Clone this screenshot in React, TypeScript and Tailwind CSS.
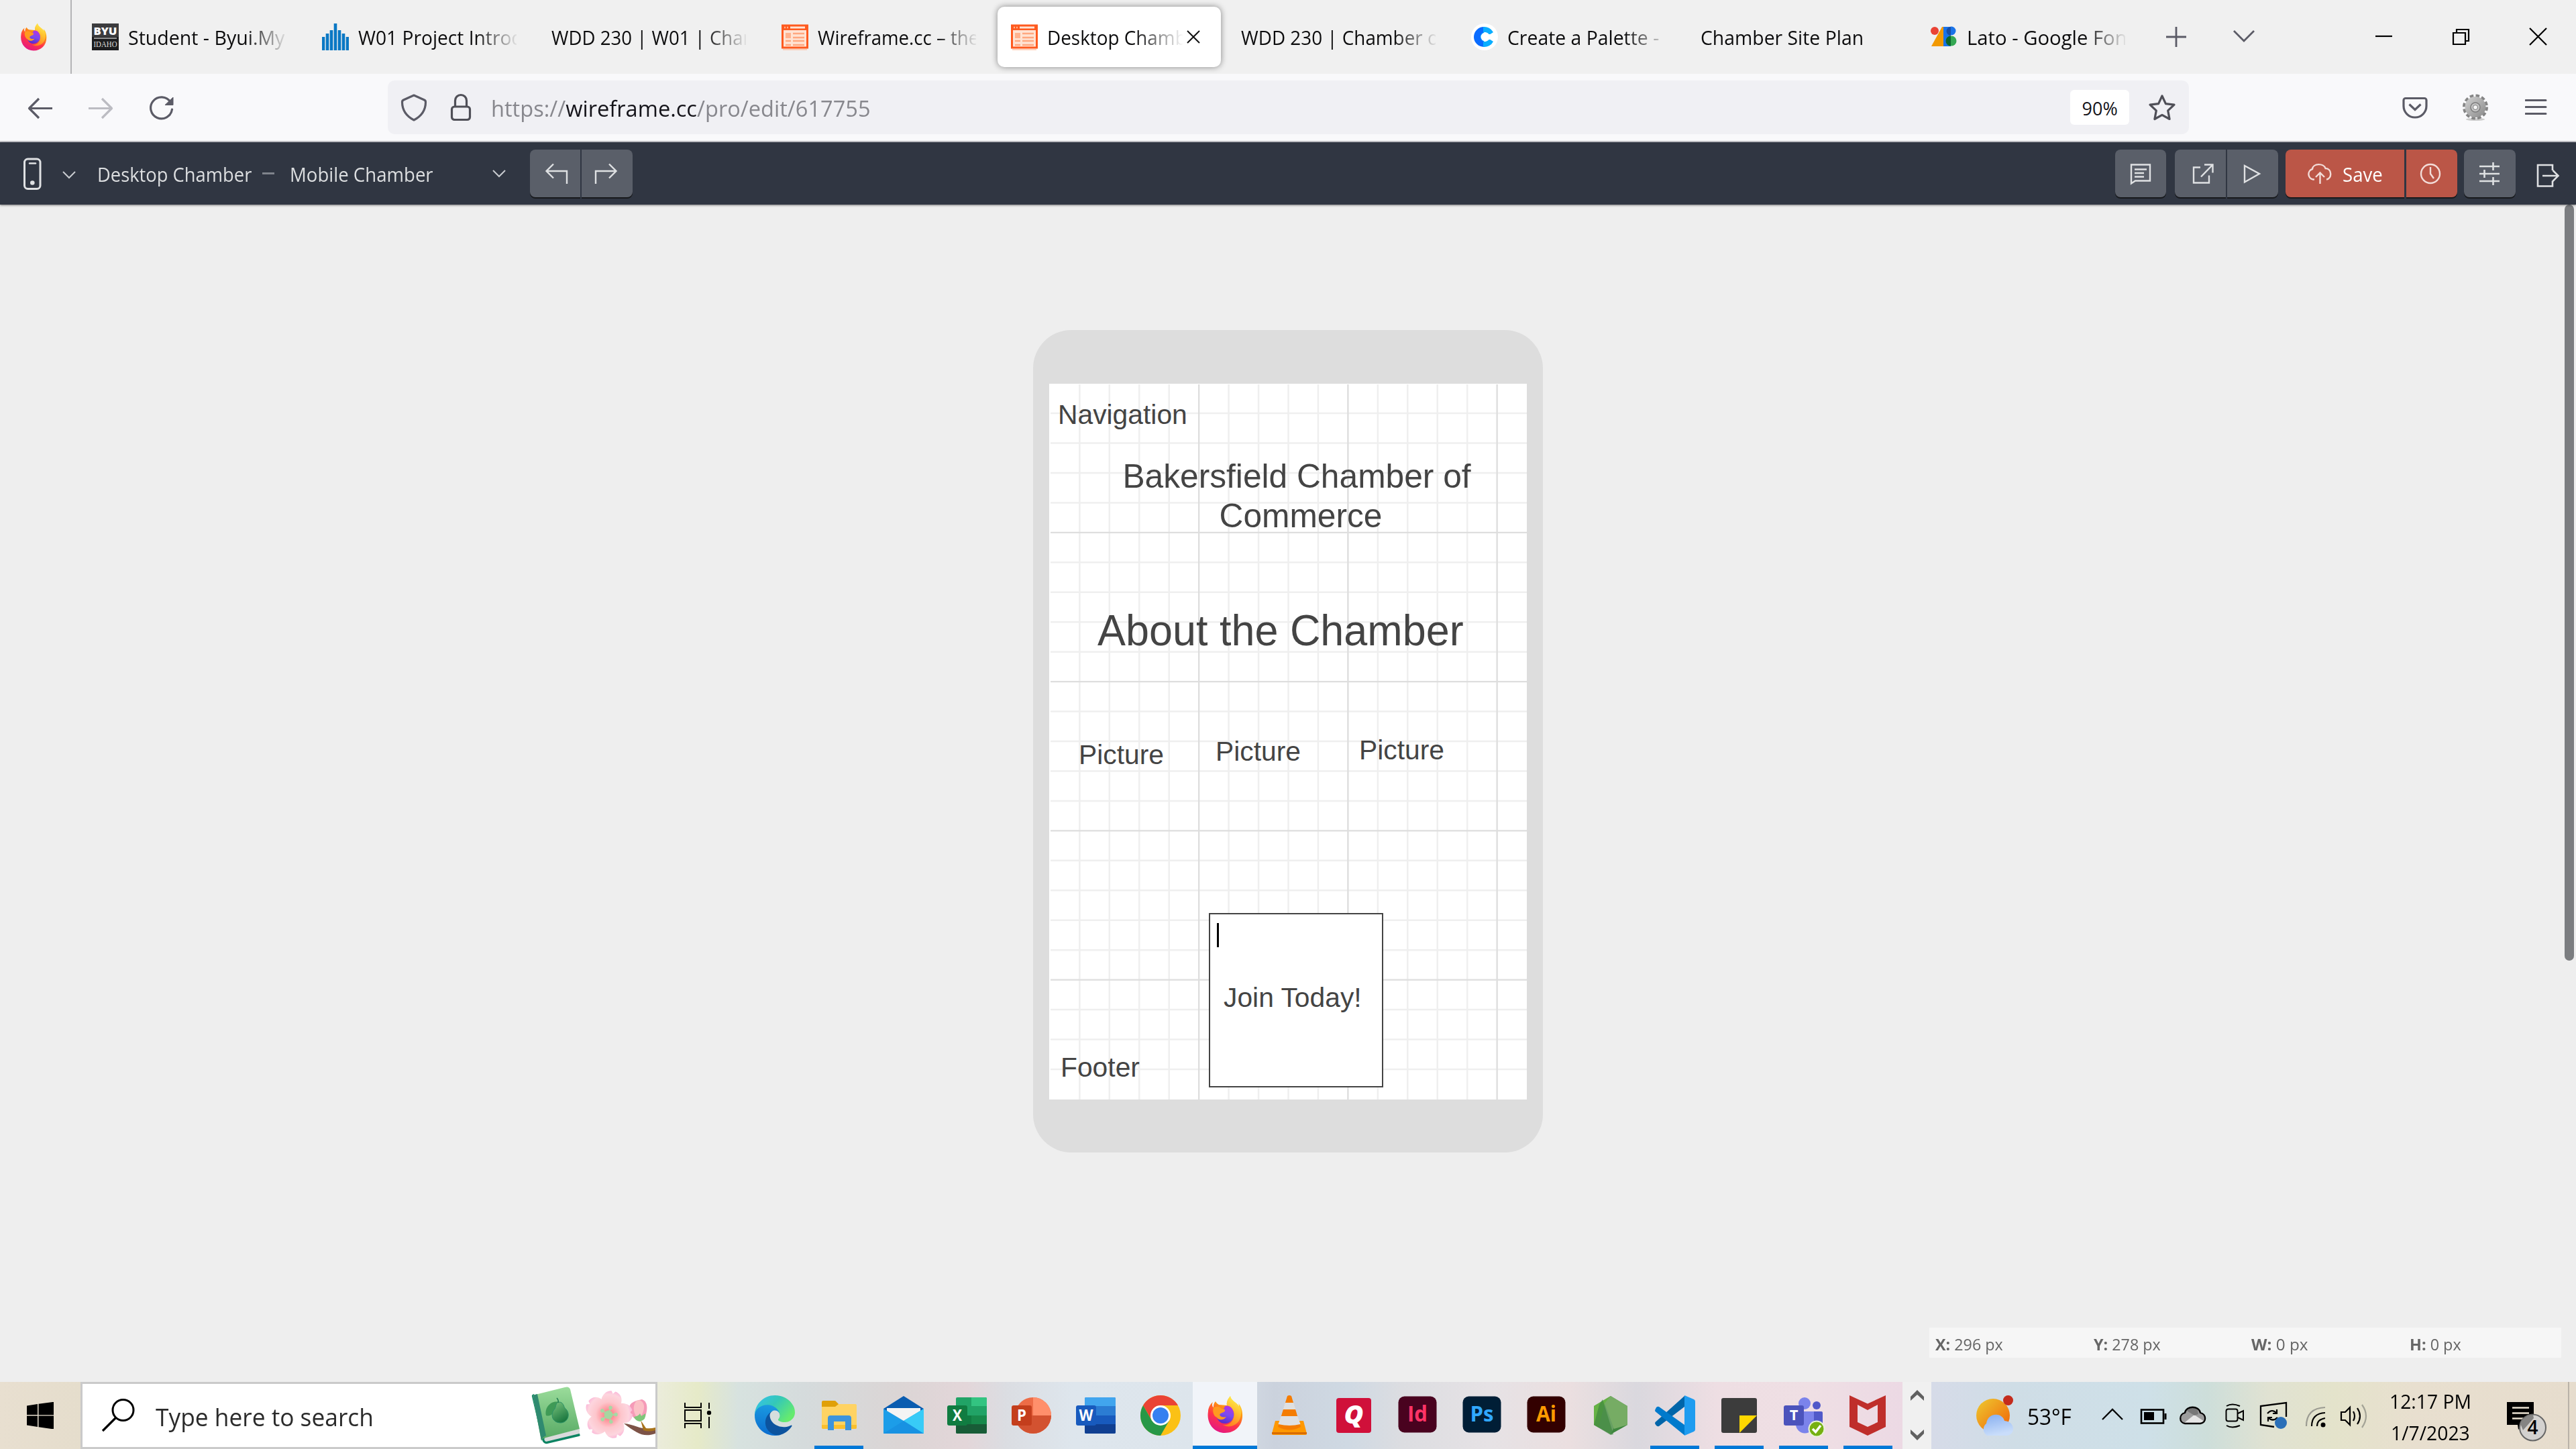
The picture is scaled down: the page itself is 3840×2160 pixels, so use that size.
import { useLayoutEffect, useRef, useState, type ReactNode } from "react";

/* Text squeezed horizontally so that it fills the given width. */
function Fit({ w, className = "", children }: { w: number; className?: string; children: ReactNode }) {
  const ref = useRef<HTMLSpanElement>(null);
  const [scale, setScale] = useState(1);
  useLayoutEffect(() => {
    if (ref.current) setScale(w / ref.current.offsetWidth);
  }, [w]);
  return (
    <span className={"block shrink-0 " + className} style={{ width: w }}>
      <span ref={ref} className="inline-block origin-left whitespace-nowrap" style={{ transform: `scaleX(${scale})` }}>
        {children}
      </span>
    </span>
  );
}

function Icon({ box, className = "", children }: { box: string; className?: string; children: ReactNode }) {
  const [, , w, h] = box.split(" ").map(Number);
  return (
    <svg viewBox={box} width={w} height={h} fill="none" className={"block shrink-0 " + className}>
      {children}
    </svg>
  );
}

function FirefoxLogo({ size, id, className = "" }: { size: number; id: string; className?: string }) {
  return (
    <svg viewBox="0 0 54 56" width={size} height={(size * 56) / 54} className={"block shrink-0 " + className}>
      <defs>
        <linearGradient id={id + "a"} x1="0.8" y1="0" x2="0.3" y2="1">
          <stop offset="0" stopColor="#fff44f" />
          <stop offset="0.35" stopColor="#ff980e" />
          <stop offset="0.65" stopColor="#ff3647" />
          <stop offset="1" stopColor="#e31587" />
        </linearGradient>
        <linearGradient id={id + "b"} x1="0.7" y1="0" x2="0.4" y2="1">
          <stop offset="0" stopColor="#b833e1" />
          <stop offset="0.5" stopColor="#7a4bf0" />
          <stop offset="1" stopColor="#592acb" />
        </linearGradient>
        <linearGradient id={id + "c"} x1="0.7" y1="0" x2="0.3" y2="1">
          <stop offset="0" stopColor="#fff44f" />
          <stop offset="1" stopColor="#ff8a16" />
        </linearGradient>
      </defs>
      <path d="M35 1c-4 5-6 9-5 14l-12-1c-2-1-4-3-5-5-3 3-3 6-3 9C7 16 8 12 9 10c-4 3-7 9-7 14C-1 42 11 56 27 56s27-12 26-28c0-7-3-13-6-16 1 2 1 4 1 5C44 10 36 8 35 1z" fill={`url(#${id}a)`} />
      <path d="M35 1c-4 5-6 9-5 14 9 3 12 10 10 18-2 8-9 12-16 11 12 7 27-2 27-17 0-5-1-9-3-11C44 10 36 8 35 1z" fill={`url(#${id}c)`} opacity="0.85" />
      <path d="M27 16c6-2 11 2 13 9 2 9-4 17-13 17-7 0-12-5-12-11 0-4 2-6 5-7 3-2 6-4 7-8z" fill={`url(#${id}b)`} />
      <path d="M10 18c4-2 9-2 12 2 3 0 6 1 5 3-1 3-6 2-8 6 2 4 6 4 10 3-3 5-11 6-14 1-5-2-7-9-5-15z" fill="#ff9a1f" />
    </svg>
  );
}

function WireframeIcon() {
  return (
    <Icon box="0 0 40 40">
      <rect x="1.500" y="3" width="37" height="33" fill="#ffe3d3" stroke="#ff5a1f" strokeWidth="3" />
      <rect x="1" y="2" width="38" height="8" fill="#ff5a1f" />
      <path d="M13 6h22" stroke="#ffe3d3" strokeWidth="3" />
      <path d="M4 6h2M8 6h2" stroke="#ffb38f" strokeWidth="2.500" />
      <rect x="6" y="14" width="8" height="8" fill="#ffb38f" />
      <path d="M17 15h17M17 21h17M6 26h8M17 26h17M6 32h8M17 32h17" stroke="#ffa880" strokeWidth="2.500" />
      <path d="M2 39h36" stroke="#ffc4a8" strokeWidth="1.500" />
    </Icon>
  );
}

const ByuIcon = () => (
  <Icon box="0 0 40 40">
    <rect width="40" height="40" fill="#1d1d1f" />
    <rect width="40" height="20" fill="#3c3c3e" />
    <text x="20" y="17" textAnchor="middle" textLength="35" lengthAdjust="spacingAndGlyphs" fontFamily="Open Sans" fontWeight="800" fontSize="15" fill="#fff">BYU</text>
    <path d="M3 22h34" stroke="#bbb" strokeWidth="1.500" />
    <text x="20" y="35" textAnchor="middle" textLength="35" lengthAdjust="spacingAndGlyphs" fontFamily="Liberation Serif" fontSize="12" fill="#ddd">IDAHO</text>
  </Icon>
);

const BarsIcon = () => (
  <Icon box="0 0 40 40">
    <path d="M2 20v20M8 15v25M14 10v30M20 0v40M26 10v30M32 15v25M38 20v20" stroke="#0a78c4" strokeWidth="4.600" />
  </Icon>
);

const CoolorsIcon = () => (
  <Icon box="0 0 40 40">
    <circle cx="20" cy="20" r="20" fill="#fff" />
    <path d="M19 5a15 15 0 0 0 0 30z" fill="#0a6cff" />
    <path d="M18 5a15 15 0 0 1 15 8l-6 4a7 7 0 1 0 0 6l6 4a15 15 0 0 1-15 8z" fill="#0aaeff" />
    <circle cx="21" cy="20" r="6.500" fill="#fff" />
    <path d="M22 16h12v8H22z" fill="#fff" />
  </Icon>
);

const GoogleFontsIcon = () => (
  <Icon box="0 0 40 40">
    <path d="M17 5h8v29H1z" fill="#f29900" />
    <circle cx="6" cy="11" r="6" fill="#ea4335" />
    <path d="M19 5h11v29H19z" fill="#1a73e8" />
    <circle cx="31" cy="11" r="6.500" fill="#1a73e8" />
    <circle cx="31" cy="26" r="7.500" fill="#34a853" />
    <path d="M30 5a6.500 6.500 0 0 0 0 13z" fill="#174ea6" />
    <path d="M30 18.500a7.500 7.500 0 0 0 0 15z" fill="#0d652d" />
  </Icon>
);

type TabData = { icon?: ReactNode; title: string; w: number; active?: boolean; plain?: boolean };
const tabs: TabData[] = [
  { icon: <ByuIcon />, title: "Student - Byui.My", w: 233 },
  { icon: <BarsIcon />, title: "W01 Project Introd", w: 246 },
  { title: "WDD 230 | W01 | Char", w: 297 },
  { icon: <WireframeIcon />, title: "Wireframe.cc – the", w: 240 },
  { icon: <WireframeIcon />, title: "Desktop Chamb", w: 208, active: true },
  { title: "WDD 230 | Chamber o", w: 295 },
  { icon: <CoolorsIcon />, title: "Create a Palette -", w: 226 },
  { title: "Chamber Site Plan", w: 243, plain: true },
  { icon: <GoogleFontsIcon />, title: "Lato - Google Fon", w: 239 },
];

function Tab({ t }: { t: TabData }) {
  return (
    <div
      className={
        "flex h-[90px] w-[332.6px] shrink-0 items-center rounded-[10px] pl-5 " +
        (t.active ? "bg-white shadow-[0_0_10px_rgba(0,0,0,0.45)]" : "")
      }
    >
      {t.icon && <div className="mr-[14px]">{t.icon}</div>}
      <div
        className={
          "mt-[2px] overflow-hidden " +
          (t.active
            ? "w-[203px] [mask-image:linear-gradient(to_right,black_130px,transparent_203px)]"
            : t.icon
              ? "w-[236px] [mask-image:linear-gradient(to_right,black_175px,transparent_240px)]"
              : "w-[290px] " + (t.plain ? "" : "[mask-image:linear-gradient(to_right,black_228px,transparent_294px)]"))
        }
      >
        <Fit w={t.w} className="text-[30px] leading-[50px] text-[#0c0c0d]">{t.title}</Fit>
      </div>
      {t.active && (
        <Icon box="0 0 22 22" className="ml-[4px]">
          <path d="M2 2l18 18M20 2L2 20" stroke="#111" strokeWidth="2" />
        </Icon>
      )}
    </div>
  );
}

function TabBar() {
  return (
    <div className="flex h-[110px] items-center bg-[#f0f0f0]">
      <div className="flex h-full w-[107px] items-center border-r-2 border-[#b4b4b6] pl-[30px]">
        <FirefoxLogo size={40} id="fxs" />
      </div>
      <div className="ml-[10px] flex gap-[10px]">
        {tabs.map((t, i) => <Tab key={i} t={t} />)}
      </div>
      <Icon box="3228 39 32 32" className="ml-[38px]">
        <path d="M3229 55h30M3244 40v30" stroke="#5b5b66" strokeWidth="2.800" />
      </Icon>
      <Icon box="3328 39 34 32" className="ml-[68px]">
        <path d="M3330 46l15 15 15-15" stroke="#5b5b66" strokeWidth="2.800" />
      </Icon>
      <Icon box="3540 38 27 32" className="ml-[178px]"><path d="M3541 53h25" stroke="#000" strokeWidth="2.200" /></Icon>
      <Icon box="3654 38 28 32" className="ml-[87px]">
        <path d="M3657 48h18v17h-18zM3662 48v-5h18v17h-5" stroke="#000" strokeWidth="2.200" />
      </Icon>
      <Icon box="3769 38 29 32" className="ml-[87px]"><path d="M3771 41l25 25M3796 41l-25 25" stroke="#000" strokeWidth="2.200" /></Icon>
    </div>
  );
}

function NavBar() {
  return (
    <div className="flex h-[102px] items-center border-b-2 border-[#c9c9ce] bg-[#f9f9fb]">
      <Icon box="41 141 38 40" className="ml-[41px] mt-[2px]">
        <path d="M78 161.500H44M58 147L43.500 161.500 58 176" stroke="#5b5b66" strokeWidth="3.200" strokeLinejoin="round" />
      </Icon>
      <Icon box="131 141 38 40" className="ml-[52px] mt-[2px]">
        <path d="M132 161.500h34M152 147l14.500 14.500L152 176" stroke="#bcbcc2" strokeWidth="3.200" strokeLinejoin="round" />
      </Icon>
      <Icon box="221 141 40 44" className="ml-[52px] mt-[4px]">
        <path d="M254 153A16 16 0 1 0 256.500 164" stroke="#5b5b66" strokeWidth="3.200" strokeLinecap="round" />
        <path d="M258 146v11.500h-12z" fill="#5b5b66" stroke="#5b5b66" strokeLinejoin="round" />
      </Icon>
      <div className="ml-[317px] flex h-20 w-[2685px] items-center rounded-[10px] bg-[#f0f0f4]">
        <Icon box="597 139 40 42" className="ml-[19px]">
          <path d="M617 142l15.500 7c1.500.7 2 1.500 2 3 0 12-6 21-17.500 27-11.500-6-17.500-15-17.500-27 0-1.500.5-2.300 2-3z" stroke="#5b5b66" strokeWidth="3.200" strokeLinejoin="round" />
        </Icon>
        <Icon box="670 139 34 42" className="ml-[33px]">
          <rect x="673.500" y="159" width="27" height="19.500" rx="4" stroke="#4f4f57" strokeWidth="3.200" />
          <path d="M678.500 159v-9a8.500 8.500 0 0 1 17 0v9" stroke="#4f4f57" strokeWidth="3.200" />
        </Icon>
        <Fit w={566} className="ml-[28px] mt-[3px] text-[33px] leading-[60px] text-[#87878d]">
          https://<span className="text-[#15141a]">wireframe.cc</span>/pro/edit/617755
        </Fit>
        <div className="ml-[1788px] flex h-[52px] w-[88px] items-center justify-center rounded-md bg-white">
          <Fit w={53} className="mt-[3px] text-[27px] leading-[50px] text-[#15141a]">90%</Fit>
        </div>
        <Icon box="3202 139 42 42" className="ml-[28px]">
          <path d="M3223 143l5.400 11.600 12.600 1.600-9.300 8.700 2.400 12.600-11.100-6.200-11.100 6.200 2.400-12.600-9.300-8.700 12.600-1.600z" stroke="#4f4f57" strokeWidth="3.200" strokeLinejoin="round" />
        </Icon>
      </div>
      <Icon box="3580 140 40 40" className="ml-[317px]">
        <path d="M3586 146.500h28a3 3 0 0 1 3 3V158a17 17 0 0 1-34 0v-8.500a3 3 0 0 1 3-3z" stroke="#5b5b66" strokeWidth="3.200" />
        <path d="M3591.500 155.500l8.500 8 8.500-8" stroke="#5b5b66" strokeWidth="3.200" />
      </Icon>
      <Icon box="3670 140 40 40" className="ml-[50px]">
        <defs>
          <linearGradient id="gear" x1="0" y1="0" x2="1" y2="1"><stop offset="0" stopColor="#d2d2d2" /><stop offset="1" stopColor="#8a8a8a" /></linearGradient>
        </defs>
        <ellipse cx="3690" cy="178" rx="14" ry="2" fill="#ccc" />
        <circle cx="3690" cy="159.500" r="16.500" stroke="#858585" strokeWidth="5" strokeDasharray="5.400 3.240" />
        <circle cx="3690" cy="159.500" r="15.500" fill="url(#gear)" />
        <circle cx="3690" cy="160" r="7" fill="#c6c6c6" stroke="#7d7d7d" strokeWidth="1.500" />
        <circle cx="3690" cy="160" r="3.500" fill="#f5f5f5" stroke="#777" />
      </Icon>
      <Icon box="3764 140 33 40" className="ml-[54px]">
        <path d="M3765 149.500h30M3765 159.500h30M3765 169.500h30" stroke="#5b5b66" strokeWidth="3" strokeLinecap="round" />
      </Icon>
    </div>
  );
}

const btn = "flex h-[71px] items-center justify-center shadow-[0_2px_0_#17191c]";

function AppBar() {
  const s = "#dfe1e3";
  return (
    <div className="relative z-10 flex h-[93px] items-center bg-[#303642] text-[29px] leading-[60px] text-[#dcdee0] shadow-[0_1px_3px_rgba(0,0,0,0.5)]">
      <Icon box="34 232 29 52" className="ml-[34px]">
        <rect x="36.500" y="236" width="23.500" height="44.500" rx="5" stroke={s} strokeWidth="3" />
        <path d="M44 242.500h9" stroke={s} strokeWidth="2.500" strokeLinecap="round" />
        <circle cx="48.300" cy="271.500" r="3.300" fill={s} />
      </Icon>
      <Icon box="92 250 22 20" className="ml-[29px] mt-[2px]"><path d="M94 256l9 9 9-9" stroke="#c9ccd0" strokeWidth="2" /></Icon>
      <Fit w={230} className="ml-[31px] mt-[3px]">Desktop Chamber</Fit>
      <div className="ml-[16px] h-[3px] w-[18px] bg-[#7f848c]" />
      <Fit w={214} className="ml-[23px] mt-[3px]">Mobile Chamber</Fit>
      <Icon box="733 248 22 20" className="ml-[87px]"><path d="M735 253l9 9 9-9" stroke="#c9ccd0" strokeWidth="2" /></Icon>
      <div className="ml-[35px] flex gap-[2px]">
        <div className={btn + " w-[75px] rounded-l-lg bg-[#5a5f69] pl-[3px]"}>
          <Icon box="812 243 35 34"><path d="M845 275v-19h-30M825 245.500l-10.500 10.500 10.500 10.500" stroke={s} strokeWidth="2.400" /></Icon>
        </div>
        <div className={btn + " w-[76px] rounded-r-lg bg-[#5a5f69] pr-[4px]"}>
          <Icon box="885 243 35 34"><path d="M887 275v-19h30M907 245.500l10.500 10.500-10.500 10.500" stroke={s} strokeWidth="2.400" /></Icon>
        </div>
      </div>
      <div className={btn + " ml-[2210px] w-[76px] rounded-lg bg-[#5a5f69]"}>
        <Icon box="3176 243 32 34">
          <path d="M3178 246.500h28v24h-22l-6 4z M3183 253.500h18M3183 259h14M3183 264.500h14" stroke={s} strokeWidth="2.400" />
        </Icon>
      </div>
      <div className="ml-[13px] flex gap-[2px]">
        <div className={btn + " w-[76px] rounded-l-lg bg-[#5a5f69] pl-2"}>
          <Icon box="3268 243 32 34">
            <path d="M3280 250.500h-10v23h23v-11M3286 246.500h12.500v12M3298 247l-17 17.500" stroke={s} strokeWidth="2.400" />
          </Icon>
        </div>
        <div className={btn + " w-[76px] rounded-r-lg bg-[#5a5f69] pr-[2px]"}>
          <Icon box="3342 243 30 34"><path d="M3346 248l22 12-22 12.500z" stroke={s} strokeWidth="2.400" /></Icon>
        </div>
      </div>
      <div className="ml-[11px] flex gap-[2.500px]">
        <div className={btn + " w-[177px] rounded-l-lg bg-[#bb5647]"}>
          <Icon box="3438 243 36 34">
            <path d="M3448 268.500h-2a8 8 0 0 1-1-15.500c1-9 17-9 19.500-1 10 0 10 16 1.500 16.500M3456.500 275v-15M3450 265l6.500-6.500 6.500 6.500" stroke="#f3dcd8" strokeWidth="2.400" />
          </Icon>
          <Fit w={60} className="ml-[16px] mt-[3px] text-white">Save</Fit>
        </div>
        <div className={btn + " w-[76px] rounded-r-lg bg-[#bb5647] pr-[3px]"}>
          <Icon box="3606 243 34 34">
            <circle cx="3623" cy="260" r="14" stroke="#f3dcd8" strokeWidth="2.400" />
            <path d="M3623 250v10l5 7" stroke="#f3dcd8" strokeWidth="2.400" />
          </Icon>
        </div>
      </div>
      <div className={btn + " ml-[10px] w-[77px] rounded-lg bg-[#5a5f69]"}>
        <Icon box="3696 242 32 35">
          <path d="M3697 249h30M3697 260h30M3697 271h30M3717.500 243v12M3704.500 254v12M3717.500 265v12" stroke={s} strokeWidth="2.600" />
        </Icon>
      </div>
      <Icon box="3780 243 35 37" className="ml-[31px] mt-[6px]">
        <path d="M3804 254v-8h-22v31.500h22v-8M3789 262h23M3804.500 254l8 8-8 8" stroke={s} strokeWidth="2.600" />
      </Icon>
    </div>
  );
}

const cols = Array.from({ length: 15 }, (_, i) => i + 1);
const rows = Array.from({ length: 23 }, (_, i) => i + 1);

const label = "absolute whitespace-nowrap text-[40.8px] leading-[48px]";

function Phone() {
  return (
    <div className="mx-auto mt-[187px] h-[1226px] w-[760px] rounded-[57px] bg-[#ddd] px-6 pt-20">
      <div className="relative h-[1067px] w-[712px] bg-white font-['Liberation_Sans',Arial,sans-serif] text-[#444]">
        <svg viewBox="0 0 712 1067" width="712" height="1067" className="block" fill="none">
          {cols.map((i) => i % 5 !== 0 && <path key={i} d={`M${0.9 + i * 44.45} 1V1067`} stroke="#efefef" strokeWidth="2.500" />)}
          {rows.map((i) => i % 5 !== 0 && <path key={i} d={`M2 ${-0.400 + i * 44.45}H712`} stroke="#efefef" strokeWidth="2.500" />)}
          {cols.map((i) => i % 5 === 0 && <path key={i} d={`M${0.9 + i * 44.45} 1V1067`} stroke="#dedede" strokeWidth="2.400" />)}
          {rows.map((i) => i % 5 === 0 && <path key={i} d={`M2 ${-0.400 + i * 44.45}H712`} stroke="#dedede" strokeWidth="2.400" />)}
        </svg>
        <div className={label + " left-[13px] top-[22px]"}>Navigation</div>
        <div className="absolute left-[99px] top-[109px] w-[556px] text-center text-[49.7px] leading-[59px]">
          <div className="pr-4">Bakersfield Chamber of</div>
          <div className="pr-1">Commerce</div>
        </div>
        <div className="absolute left-[72px] top-[330px] whitespace-nowrap text-[65px] leading-[76px]">
          <Fit w={546}>About the Chamber</Fit>
        </div>
        <div className={label + " left-[44px] top-[529px]"}>Picture</div>
        <div className={label + " left-[248px] top-[524px]"}>Picture</div>
        <div className={label + " left-[462px] top-[522px]"}>Picture</div>
        <div className="absolute left-[238px] top-[789px] h-[260px] w-[260px] border-2 border-[#444] bg-white">
          <div className="absolute left-[10px] top-[13px] h-[36px] w-[3px] bg-black" />
        </div>
        <div className={label + " left-[260px] top-[891px]"}>Join Today!</div>
        <div className={label + " left-[17px] top-[995px]"}>Footer</div>
      </div>
    </div>
  );
}

function Editor() {
  const stats = [["X:", "296 px", 101], ["Y:", "278 px", 100], ["W:", "0 px", 84], ["H:", "0 px", 77]] as const;
  return (
    <div className="relative flex h-[1755px] flex-col bg-[#eee]">
      <Phone />
      <div className="mb-9 mr-[22px] mt-auto grid h-[45px] w-[942px] grid-cols-4 items-center self-end bg-[#f6f6f6] text-[24px] leading-[40px] text-[#666]">
        {stats.map(([k, v, w]) => (
          <Fit key={k} w={w} className="ml-[9px] mt-[4px]"><b>{k}</b> {v}</Fit>
        ))}
      </div>
      <div className="absolute right-[3px] top-0 h-[1127px] w-[14px] rounded-full bg-[#7b7d80]" />
    </div>
  );
}

function AdobeTile({ bg, fg, t }: { bg: string; fg: string; t: string }) {
  return (
    <>
      <rect x="1.500" y="1.500" width="57" height="54" rx="9" fill={bg} />
      <text x="30" y="39" textAnchor="middle" fontFamily="Open Sans" fontWeight="700" fontSize="32" textLength={t === "Ps" ? 35 : 30} lengthAdjust="spacingAndGlyphs" fill={fg}>{t}</text>
    </>
  );
}

function OfficeTile({ c, t }: { c: string; t: string }) {
  return (
    <>
      <rect x="0" y="15" width="30" height="30" rx="3" fill={c} />
      <text x="15" y="38" textAnchor="middle" fontFamily="Open Sans" fontWeight="700" fontSize="23" textLength={t === "W" ? 21 : 14} lengthAdjust="spacingAndGlyphs" fill="#fff">{t}</text>
    </>
  );
}

const apps: { name: string; open?: boolean; art: ReactNode }[] = [
  {
    name: "edge",
    art: (
      <g transform="scale(0.2344)">
        <defs>
          <linearGradient id="e1" x1="0" y1="0" x2="1" y2="0.6"><stop offset="0" stopColor="#35c1f1" /><stop offset="0.5" stopColor="#34c8b8" /><stop offset="1" stopColor="#66eb6e" /></linearGradient>
          <linearGradient id="e2" x1="0.5" y1="0" x2="0.4" y2="1"><stop offset="0" stopColor="#1b9de2" /><stop offset="1" stopColor="#0b6cce" /></linearGradient>
        </defs>
        <path fill="#0c549f" d="M231.100 190.500c-3.400 1.800-6.900 3.400-10.500 4.700-11.500 4.300-23.600 6.500-35.900 6.500-47.300 0-88.500-32.500-88.500-74.300.1-11.400 6.400-21.900 16.400-27.300-42.800 1.800-53.800 46.400-53.800 72.500 0 73.900 68.100 81.400 82.800 81.400 7.900 0 19.800-2.300 27-4.600l1.300-.4c27.600-9.500 51-28.100 66.600-52.800 1.200-1.900.6-4.300-1.200-5.500-1.300-.8-2.900-.9-4.200-.2z" />
        <path fill="url(#e2)" d="M105.700 241.400c-8.900-5.500-16.600-12.800-22.700-21.300-26.300-36-18.400-86.500 17.600-112.800 3.800-2.700 7.700-5.200 11.900-7.200 3.100-1.500 8.400-4.100 15.500-4 10.100.1 19.600 4.900 25.700 13 4 5.400 6.300 11.900 6.400 18.700 0-.2 24.500-79.600-80-79.600-43.900 0-80 41.700-80 78.200-.2 19.300 4 38.500 12.100 56 27.600 58.800 94.800 87.600 156.400 67.100-21.100 6.600-44.100 3.700-62.900-8.100z" />
        <path fill="url(#e1)" d="M152.300 148.900c-.8 1-3.300 2.500-3.300 5.700 0 2.600 1.700 5.100 4.700 7.200 14.400 10 41.500 8.700 41.600 8.700 10.700 0 21.100-2.900 30.300-8.300 18.800-11 30.400-31.100 30.400-52.900.3-22.400-8-37.300-11.300-43.900C223.500 23.900 177.700 0 128 0 57.500 0 0 56.500 0 127c.5-36.400 36.600-65.800 79.700-65.800 3.500 0 23.400.3 41.800 10 16.300 8.500 24.900 18.900 30.800 29.100 6.200 10.600 7.200 24 7.200 29.400s-2.700 13.300-7.200 19.200z" />
      </g>
    ),
  },
  {
    name: "explorer", open: true,
    art: (
      <>
        <path d="M6 8h17q2 0 3 2l4 4-4 4H4v-8q0-2 2-2z" fill="#e0a008" />
        <path d="M4 17h20l5-4h25q2 0 2 2v33q0 2-2 2H6q-2 0-2-2z" fill="#ffd363" />
        <path d="M4 44h52v4q0 2-2 2H6q-2 0-2-2z" fill="#fbc02d" />
        <path d="M13 52V34q0-4 4-4h27q4 0 4 4v18h-9V39H22v13z" fill="#3d94dc" />
      </>
    ),
  },
  {
    name: "mail",
    art: (
      <>
        <path d="M0 20L30 1l30 19v10H0z" fill="#0a5cb0" />
        <path d="M5 19h50v12L30 42 5 31z" fill="#f4f4f4" />
        <path d="M0 20l30 18 30-18v37H0z" fill="#1c9de8" />
        <path d="M60 20L30 38l30 19z" fill="#38cbf7" />
        <path d="M0 57L30 38l30 19z" fill="#1584dc" opacity="0.450" />
      </>
    ),
  },
  {
    name: "excel",
    art: (
      <>
        <rect x="13" y="3" width="46" height="54" rx="2" fill="#21a366" />
        <path d="M36 3h21q2 0 2 2v11H36z" fill="#33c481" />
        <path d="M13 30h23v13H13z" fill="#107c41" /><path d="M36 30h23v13H36z" fill="#17894b" />
        <path d="M13 43h46v12q0 2-2 2H15q-2 0-2-2z" fill="#185c37" />
        <OfficeTile c="#107c41" t="X" />
      </>
    ),
  },
  {
    name: "powerpoint",
    art: (
      <>
        <circle cx="32" cy="30" r="27" fill="#ed6c47" />
        <path d="M32 3a27 27 0 0 1 27 27H32z" fill="#ff8f6b" />
        <path d="M5 30h54a27 27 0 0 1-54 0z" fill="#d35230" />
        <OfficeTile c="#c43e1c" t="P" />
      </>
    ),
  },
  {
    name: "word",
    art: (
      <>
        <rect x="13" y="3" width="46" height="54" rx="2" fill="#2b7cd3" />
        <path d="M15 3h42q2 0 2 2v11H13V5q0-2 2-2z" fill="#41a5ee" />
        <path d="M13 30h46v13H13z" fill="#185abd" />
        <path d="M13 43h46v12q0 2-2 2H15q-2 0-2-2z" fill="#103f91" />
        <OfficeTile c="#185abd" t="W" />
      </>
    ),
  },
  {
    name: "chrome",
    art: (
      <>
        <circle cx="30" cy="30" r="30" fill="#fbc116" />
        <path d="M4 15a30 30 0 0 1 52 0H30L17 37z" fill="#ea4335" />
        <path d="M4 15l13 22.500L30 45l13-7.500L30 60A30 30 0 0 1 4 15z" fill="#279847" />
        <circle cx="30" cy="30" r="15" fill="#fff" />
        <circle cx="30" cy="30" r="12" fill="#3680f0" />
      </>
    ),
  },
  { name: "firefox", open: true, art: null },
  {
    name: "vlc",
    art: (
      <>
        <path d="M9 38h42l5 19q0 2-2 2H6q-2 0-2-2z" fill="#ff9800" />
        <path d="M4 55h52v3H4z" fill="#d96c00" />
        <path d="M27 1q3-2 6 0l14 46q-17 9-34 0z" fill="#f57c00" />
        <path d="M23.500 11h13l3 10h-19zM17.500 31h25l4 12q-16 4-33 0z" fill="#dfe0e1" />
      </>
    ),
  },
  {
    name: "quicken",
    art: (
      <>
        <rect x="4" y="4" width="52" height="52" rx="4" fill="#d0103a" />
        <text x="30" y="42" textAnchor="middle" fontFamily="Open Sans" fontWeight="800" fontStyle="italic" fontSize="37" textLength="29" lengthAdjust="spacingAndGlyphs" fill="#fff">Q</text>
      </>
    ),
  },
  { name: "indesign", art: <AdobeTile bg="#49021f" fg="#ff3366" t="Id" /> },
  { name: "photoshop", art: <AdobeTile bg="#001e36" fg="#31a8ff" t="Ps" /> },
  { name: "illustrator", art: <AdobeTile bg="#330000" fg="#ff9a00" t="Ai" /> },
  {
    name: "node",
    art: (
      <>
        <path d="M30 1l25 15v28L30 58 5 44V16z" fill="#68a063" />
        <path d="M30 1L5 16v28l7 4 9-36z" fill="#66b245" />
        <path d="M18 6l16 52-4 1L5 44l8-30z" fill="#3f873f" opacity="0.700" />
        <path d="M55 44L30 58l5-10z" fill="#3f873f" />
        <path d="M30 1l25 15v28L35 50 21 12z" fill="#76ac64" />
      </>
    ),
  },
  {
    name: "vscode", open: true,
    art: (
      <>
        <path d="M44 1v16L6 46q-2 1-4-1l-1.500-2q-1-1.500 0-3z" fill="#0065a9" />
        <path d="M.5 21L2 18q2-2 4-1l38 27v15.500L.5 24q-1-1.500 0-3z" fill="#007acc" />
        <path d="M44 0l14 6q2 1 2 3v42q0 2-2 3l-14 6z" fill="#1f9cf0" />
      </>
    ),
  },
  {
    name: "sticky", open: true,
    art: (
      <>
        <rect x="3" y="4" width="53" height="52" rx="3" fill="#3c3c3c" />
        <path d="M30 30h26L30 56z" fill="#ffd800" />
      </>
    ),
  },
  {
    name: "teams", open: true,
    art: (
      <>
        <circle cx="50" cy="15" r="6" fill="#5059c9" />
        <path d="M40 24h17q2 0 2 2v14a9 10 0 0 1-19 0z" fill="#5059c9" />
        <circle cx="32" cy="12" r="9" fill="#7b83eb" />
        <path d="M19 24h27v19a13 13 0 0 1-27 0z" fill="#7b83eb" />
        <rect x="1" y="15" width="30" height="30" rx="3" fill="#4b53bc" />
        <text x="16" y="37" textAnchor="middle" fontFamily="Open Sans" fontWeight="700" fontSize="22" fill="#fff">T</text>
        <circle cx="50" cy="50" r="12.500" fill="#e8f2d8" />
        <circle cx="50" cy="50" r="10.500" fill="#76b011" />
        <path d="M44 50l4.500 4.500L56 45" stroke="#fff" strokeWidth="3.500" fill="none" />
      </>
    ),
  },
  {
    name: "mcafee", open: true,
    art: <path d="M3 0l27 12.500L57 0v47L30 60 3 47zM15 14v26l15 7 15-7V14L30 22z" fill="#bf2e2b" fillRule="evenodd" />,
  },
];

function BlossomArt() {
  const petals = [0, 72, 144, 216, 288];
  return (
    <Icon box="790 2064 187 92" className="ml-auto">
      <defs>
        <linearGradient id="book" x1="0" y1="0" x2="0" y2="1"><stop offset="0" stopColor="#9bdc9b" /><stop offset="1" stopColor="#55a862" /></linearGradient>
        <linearGradient id="pear" x1="0" y1="0" x2="0.5" y2="1"><stop offset="0" stopColor="#7cc47e" /><stop offset="1" stopColor="#1d7a41" /></linearGradient>
        <radialGradient id="petal" gradientUnits="userSpaceOnUse" cx="907" cy="2109" r="38"><stop offset="0.1" stopColor="#ff7f86" /><stop offset="0.5" stopColor="#fdc6cc" /><stop offset="0.8" stopColor="#fdd5de" /><stop offset="1" stopColor="#fbaed8" /></radialGradient>
      </defs>
      <path d="M793 2082q-1-3 3-4l18 67 50-14v7q2 2-1 3l-47 11q-6 1-8-6z" fill="#0c8463" />
      <path d="M812 2143l52-13v7l-50 12q-4-2-2-6z" fill="#d9dadb" />
      <path d="M794 2080l48-12q6-2 8 3l14 59-50 13q-6 1-7 5z" fill="url(#book)" />
      <path d="M794 2080l7-2 13 62q-5 2-7 7z" fill="#2f8a70" />
      <path d="M833 2090c-12-3-22 9-19 20q6 2 11-4z" fill="#3f9a56" />
      <path d="M833 2090c7 0 7 6 9 9 9 7 6 21-6 22-14 0-16-14-9-21 2-3 1-9 6-10z" fill="url(#pear)" stroke="#2c9168" />
      <path d="M832 2091q1-4-2-7" stroke="#1e7a50" strokeWidth="1.500" />
      <path d="M930 2122c17 1 29 12 47 7v8c-18 6-27 0-47-15z" fill="#7d5347" />
      <path d="M955 2117l8 12q6 1 14-1v4q-10 3-18 0z" fill="#a8731c" />
      <path d="M938 2098c1-8 10-10 19-12 11 4 7 20 5 25l-9 7c-8-2-15-10-15-20z" fill="#f59ab8" />
      <path d="M949 2088c6-3 12 3 11 11-1 8-5 13-8 16-8-6-10-20-3-27z" fill="#fbc0c6" />
      <path d="M945 2112q7-1 9-5l2 4 6-4q2 9-8 12-7-1-9-7z" fill="#7fc67a" />
      {petals.map((a) => (
        <path key={a} d="M907 2112c-9-5-16-15-15-25 1-8 6-13 12-14l3 4 3-4c7 1 12 6 12 14 0 10-6 20-15 25z" fill="url(#petal)" transform={`rotate(${a + 12} 907 2109)`} />
      ))}
      {petals.map((a) => (
        <g key={a} transform={`rotate(${a + 16} 907 2109)`}>
          <path d="M907 2109v-10" stroke="#a8d8a4" strokeWidth="2" />
          <circle cx="907" cy="2098" r="2.800" fill="#a8d8a4" />
        </g>
      ))}
      <circle cx="907" cy="2109" r="6.500" fill="#a5d6a0" />
    </Icon>
  );
}

function Tray() {
  return (
    <div className="flex h-full flex-1 items-center">
      <Icon box="2944 2080 60 60" className="ml-[65px]">
        <defs>
          <linearGradient id="sun" x1="0" y1="0" x2="1" y2="1"><stop offset="0.100" stopColor="#eec02c" /><stop offset="0.900" stopColor="#f06a0a" /></linearGradient>
          <linearGradient id="cld" x1="0" y1="0" x2="0.300" y2="1"><stop offset="0" stopColor="#86aef0" /><stop offset="1" stopColor="#c9ddfa" /></linearGradient>
        </defs>
        <circle cx="2971" cy="2110" r="25" fill="url(#sun)" />
        <path d="M2962 2140a11 11 0 0 1-1-18c2-17 24-17 27-4 16 1 17 20 4 22z" fill="url(#cld)" />
        <circle cx="2993.500" cy="2087.500" r="7.500" fill="#c42b1c" />
      </Icon>
      <Fit w={66} className="ml-[18px] mt-[4px] text-[33px] leading-[60px]">53°F</Fit>
      <Icon box="3132 2090 34 40" className="ml-[44px]"><path d="M3134 2116l15-15 15 15" stroke="#000" strokeWidth="2.300" /></Icon>
      <Icon box="3190 2090 40 40" className="ml-[24px]">
        <rect x="3192" y="2101.500" width="33" height="20" stroke="#000" strokeWidth="2.600" />
        <path d="M3196 2105h15v12h-15z" fill="#000" /><path d="M3228 2107v9" stroke="#000" strokeWidth="3" />
      </Icon>
      <Icon box="3248 2090 42 40" className="ml-[18px]">
        <path d="M3257 2122c-9-1-9-14 0-16 2-11 21-11 23 0 9 2 10 14 0 16z" fill="#9c9c9c" />
        <path d="M3256 2121l15-12 15 10-4 3h-24z" fill="#e6e6e6" /><path d="M3260 2103q8-9 16-1l1 6-6 2z" fill="#777" />
        <path d="M3257 2122c-9-1-9-14 0-16 2-11 21-11 23 0 9 2 10 14 0 16z" stroke="#000" strokeWidth="2.300" />
      </Icon>
      <Icon box="3316 2090 32 40" className="ml-[26px]">
        <rect x="3318.500" y="2100.500" width="17" height="18" rx="3" stroke="#000" strokeWidth="2" />
        <path d="M3336 2107l8-4v14l-8-4M3319 2096q8-5 20 0M3319 2125q8 5 20 0" stroke="#000" strokeWidth="2" />
      </Icon>
      <Icon box="3368 2089 42 42" className="ml-[20px]">
        <path d="M3408 2112v-21l-38 5v28l20 3" stroke="#000" strokeWidth="2.300" />
        <path d="M3380 2107q7-8 14 0m0-6v6h-6M3395 2113q-7 7-14 0m0 6v-6h6" stroke="#000" strokeWidth="2.200" />
        <circle cx="3400" cy="2121" r="9" fill="#2a6fb8" />
      </Icon>
      <Icon box="3435 2090 34 40" className="ml-[25px]">
        <circle cx="3463" cy="2124" r="3.500" fill="#000" />
        <path d="M3454 2126q0-10 12-12M3446 2126q0-19 20-20" stroke="#000" strokeWidth="2.200" />
        <path d="M3438 2126q0-27 28-28" stroke="#9b9b92" strokeWidth="2.200" />
      </Icon>
      <Icon box="3488 2090 42 40" className="ml-[19px]">
        <path d="M3490 2105h6l7-7v26l-7-7h-6z" stroke="#000" strokeWidth="2.200" />
        <path d="M3508 2104q4 7 0 14M3514 2099q8 12 0 24" stroke="#000" strokeWidth="2.200" />
        <path d="M3521 2094q12 17 0 34" stroke="#a3a396" strokeWidth="2.200" />
      </Icon>
      <div className="ml-[32px] mt-[3px] flex flex-col text-[29px] leading-[47px]">
        <Fit w={122}>12:17 PM</Fit>
        <Fit w={118} className="ml-[2px]">1/7/2023</Fit>
      </div>
      <Icon box="3736 2080 62 72" className="ml-[52px] mt-[12px]">
        <path d="M3737 2090h40v34h-15l-8 7-1-7h-16z" fill="#000" />
        <path d="M3745 2098.500h25M3745 2106.500h25M3745 2114.500h25" stroke="#e8dfcf" strokeWidth="2.400" />
        <circle cx="3775.500" cy="2128" r="19.500" fill="#d3d1cf" stroke="#666" strokeWidth="2" />
        <path d="M3757 2122a19.500 19.500 0 0 1 19-13l1 5-16 18z" fill="#858483" />
        <text x="3775.500" y="2138" textAnchor="middle" fontFamily="Open Sans" fontWeight="600" fontSize="28" fill="#000">4</text>
      </Icon>
      <div className="ml-[30px] h-full w-[2px] bg-[#b9b2a8]" />
    </div>
  );
}

function Taskbar() {
  return (
    <div className="flex h-[100px] items-center text-black bg-[linear-gradient(90deg,#e8dfd0_0px,#e5ddcc_120px,#ebecdb_980px,#e6eac8_1040px,#d7e2df_1100px,#d5dbdc_1200px,#dbd5d5_1340px,#e3d6d9_1440px,#dbdde2_1500px,#dee6ed_1600px,#dde5ec_1780px,#cbd2dd_1900px,#cfd9e3_2010px,#dcdde1_2090px,#e6e2e5_2220px,#ebdfe0_2340px,#dad8de_2440px,#eedee3_2560px,#efdfe4_2700px,#ecd9e4_2836px,#d6dbe8_2880px,#cfdde6_3000px,#cee0e8_3200px,#cddeda_3290px,#e0e2d2_3380px,#e4e3cb_3480px,#e8dfcf_3600px,#e6dccd_3840px)]">
      <div className="flex w-[120px] justify-center">
        <Icon box="40 2090 40 40">
          <path d="M40 2095.500l16-2.500v16H40zM57.500 2092.800l22.500-3v19.400H57.500zM40 2110.500h16V2127l-16-2.500zM57.500 2110.500H80v20l-22.500-3.300z" fill="#000" />
        </Icon>
      </div>
      <div className="flex h-full w-[860px] items-center border-[3px] border-[#cacaca] bg-white">
        <Icon box="150 2084 53 52" className="ml-[27px]">
          <circle cx="183.500" cy="2102" r="15.500" stroke="#000" strokeWidth="3" />
          <path d="M172.500 2113.500L153 2133" stroke="#000" strokeWidth="3.200" />
        </Icon>
        <Fit w={325} className="ml-[29px] mt-[4px] text-[36.500px] leading-[60px] text-[#2b2b2b]">Type here to search</Fit>
        <BlossomArt />
      </div>
      <div className="flex w-[127px] pl-[39px]">
        <Icon box="1019 2090 42 40">
          <path d="M1021 2091v7h24v-7M1021 2129v-7h24v7M1021 2102h24v16h-24z" stroke="#000" strokeWidth="2" />
          <path d="M1057 2091v9M1057 2112v17" stroke="#000" strokeWidth="2" />
          <circle cx="1057" cy="2106" r="3.200" fill="#000" />
        </Icon>
      </div>
      <div className="flex h-full w-[1729px]">
        {apps.map((a) => {
          const focused = a.name === "firefox";
          return (
            <div key={a.name} className={"flex h-full w-[95.85px] shrink-0 flex-col items-center " + (focused ? "bg-[#f1f4f9]" : "")}>
              <div className="flex h-[95px] items-center pt-[5px]">
                {focused ? <FirefoxLogo size={54} id="fxl" className="mb-1" /> : (
                  <svg viewBox="0 0 60 60" width="60" height="60" className="block overflow-visible">{a.art}</svg>
                )}
              </div>
              {a.open && <div className={"h-[5px] bg-[#0078d7] " + (focused ? "w-full" : "w-[73px]")} />}
            </div>
          );
        })}
      </div>
      <div className="flex h-full w-[43px] flex-col items-center justify-between bg-[#f0f0f0] pb-[13px] pt-[12px]">
        <Icon box="0 0 20 16"><path d="M10 0l10 10v6l-10-9-10 9v-6z" fill="#606060" /></Icon>
        <Icon box="0 0 20 16"><path d="M10 16L0 6V0l10 9 10-9v6z" fill="#606060" /></Icon>
      </div>
      <Tray />
    </div>
  );
}

export default function App() {
  return (
    <div className="flex h-[2160px] w-[3840px] flex-col overflow-hidden bg-[#eee] font-['Open_Sans','Noto_Sans',sans-serif]">
      <TabBar />
      <NavBar />
      <AppBar />
      <Editor />
      <Taskbar />
    </div>
  );
}
